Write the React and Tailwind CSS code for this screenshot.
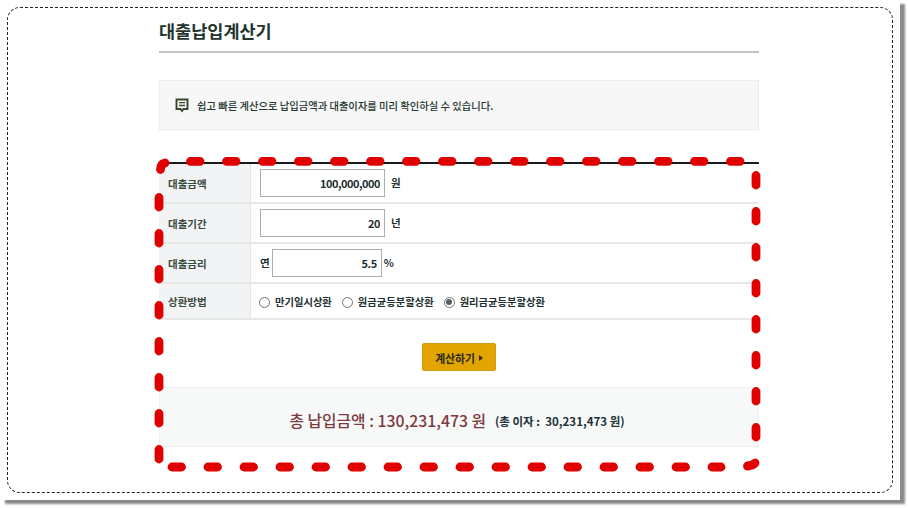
const font = { fontFamily: '"Noto Sans CJK KR", "Noto Sans", sans-serif' };

function Row({ label, children, last }) {
  return (
    <div className={`flex ${last ? 'h-[36px]' : 'h-[40px]'} border-b-2 border-[#e6e8e8]`}>
      <div className="w-[92px] shrink-0 bg-[#f1f3f4] border-r border-[#e3e5e5] pl-[9px] pt-[2px] flex items-center text-[10.5px] font-bold text-[#3a4a3f]">
        {label}
      </div>
      <div className="flex-1 flex items-center text-[10.5px] font-bold text-[#1d2f33]">{children}</div>
    </div>
  );
}

function Field({ value, width }) {
  return (
    <input
      readOnly
      value={value}
      className={`${width} h-[28px] border border-[#a9b0ae] bg-white text-right pr-[4px] text-[11px] tracking-[-0.5px] font-bold text-[#1d2f33] outline-none`}
    />
  );
}

function Radio({ label, checked }) {
  return (
    <span className="flex items-center gap-[5px] text-[10.3px]">
      <span className="w-[11px] h-[11px] rounded-full border border-[#6d7674] flex items-center justify-center">
        {checked && <span className="w-[6px] h-[6px] rounded-full bg-[#55605e]" />}
      </span>
      {label}
    </span>
  );
}

export default function App() {
  return (
    <div className="w-[908px] h-[508px] bg-white" style={font}>
      <div className="w-[900px] h-[500px] p-[7px] bg-white shadow-[5px_4px_2px_#8a8a8a] relative">
        <div className="w-[886px] h-[486px] border border-dashed border-[#222] rounded-[13px] pl-[151px]">
          <div className="w-[600px]">
            {/* 제목 */}
            <h1 className="h-[45px] border-b-2 border-[#c0c4c2] pt-[9px] text-[17.5px] leading-[28px] font-bold text-[#24352f]">
              대출납입계산기
            </h1>

            {/* 안내 */}
            <div className="mt-[27px] h-[50px] bg-[#f6f7f6] border border-[#eceeed] flex items-center pl-[15px] text-[10.3px] font-medium text-[#24352f]">
              <svg width="14" height="15" viewBox="0 0 14 15" fill="none" className="mr-[8px]">
                <path d="M1.5 1.5h11v9.5H8.5L7 13 5.5 11h-4z" stroke="#38482f" strokeWidth="1.9" />
                <path d="M4 4.7h6M4 7.5h6" stroke="#38482f" strokeWidth="1.3" />
              </svg>
              <span className="pt-px">쉽고 빠른 계산으로 납입금액과 대출이자를 미리 확인하실 수 있습니다.</span>
            </div>

            {/* 입력 표 */}
            <div className="mt-[32px] border-t-2 border-[#1a1a1a]">
              <Row label="대출금액">
                <div className="ml-[9px]"><Field value="100,000,000" width="w-[125px]" /></div>
                <span className="ml-[6px] -mt-[1px]">원</span>
              </Row>
              <Row label="대출기간">
                <div className="ml-[9px]"><Field value="20" width="w-[125px]" /></div>
                <span className="ml-[6px] -mt-[1px]">년</span>
              </Row>
              <Row label="대출금리">
                <span className="ml-[9px]">연</span>
                <div className="ml-[2px]"><Field value="5.5" width="w-[110px]" /></div>
                <span className="ml-[2px]">%</span>
              </Row>
              <Row label="상환방법" last>
                <div className="ml-[8px] pt-[2px] flex gap-[10px]">
                  <Radio label="만기일시상환" />
                  <Radio label="원금균등분할상환" />
                  <Radio label="원리금균등분할상환" checked />
                </div>
              </Row>
            </div>

            {/* 계산 버튼 */}
            <div className="flex justify-center mt-[23px]">
              <button className="w-[74px] h-[28px] pt-[2px] bg-[#e2a500] border border-[#cf9a10] rounded-[2px] text-[10.8px] font-bold text-[#2a2a1a] flex items-center justify-center gap-[4px]">
                계산하기
                <span className="w-0 h-0 border-y-[3.5px] border-y-transparent border-l-[4px] border-l-[#2a2a1a]" />
              </button>
            </div>

            {/* 결과 */}
            <div className="mt-[16px] h-[60px] bg-[#f7f8f8] border border-[#eff0f0] flex items-center justify-center pt-[7px] pr-[4px]">
              <span className="text-[15.8px] font-medium text-[#7d3a40]">총 납입금액 : 130,231,473 원</span>
              <span className="ml-[9px] mt-[2px] text-[11.5px] font-bold text-[#1d3138] whitespace-pre">(총 이자 :  30,231,473 원)</span>
            </div>
          </div>
        </div>

        {/* 빨간 점선 강조 */}
        <svg width="908" height="508" className="absolute left-0 top-0 pointer-events-none" fill="none" stroke="#e00000" strokeWidth="8.8" strokeLinecap="round">
          <path d="M190.5 161.3H740" strokeDasharray="9.5 26.5" />
          <path d="M756 175.5V437" strokeDasharray="9.5 26.5" />
          <path d="M172 467H721" strokeDasharray="9.5 26.5" />
          <path d="M159 197.5V459" strokeDasharray="9.5 26.5" />
          <path d="M160.5 169.5Q160.5 164 165 163" />
          <path d="M747.5 466Q753 465.5 755 463" />
        </svg>
      </div>
    </div>
  );
}
